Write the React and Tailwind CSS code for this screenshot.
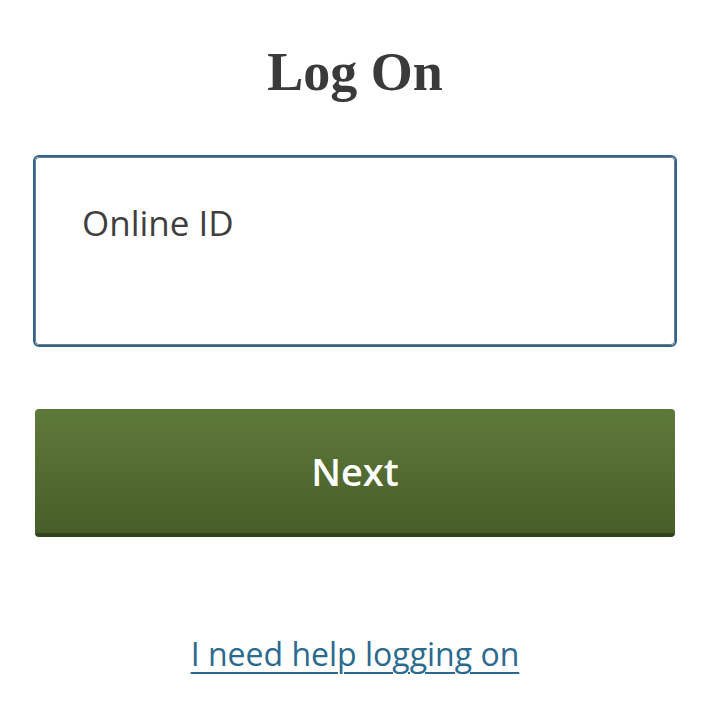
export default function App() {
  return (
    <div className="w-[702px] h-[716px] bg-white flex flex-col items-center pl-[8px]">
      <h1 className="mt-[42px] h-[60px] leading-[60px] text-[54px] font-bold text-[#3a3a3a] font-['Liberation_Serif',serif]">
        Log On
      </h1>
      <div className="mt-[55px] w-[640px] h-[188px] rounded-[4px] border border-[#7a7a7a] outline-2 outline-solid outline-[#2b6690] bg-white">
        <div className="pl-[46px] pt-[45px] text-[35px] leading-[40px] text-[#3f3f3f] font-['Open_Sans',sans-serif]">
          Online ID
        </div>
      </div>
      <button className="mt-[64px] w-[640px] h-[128px] rounded-[4px] bg-gradient-to-b from-[#5e7a3a] to-[#485e29] border-b-[4px] border-[#33451d] text-white text-[38px] font-semibold font-['Open_Sans',sans-serif] flex items-center justify-center">
        Next
      </button>
      <a href="#" className="mt-[97px] text-[32px] leading-[40px] text-[#2a6a8f] underline underline-offset-[6px] decoration-2 font-['Open_Sans',sans-serif]">
        I need help logging on
      </a>
    </div>
  );
}
